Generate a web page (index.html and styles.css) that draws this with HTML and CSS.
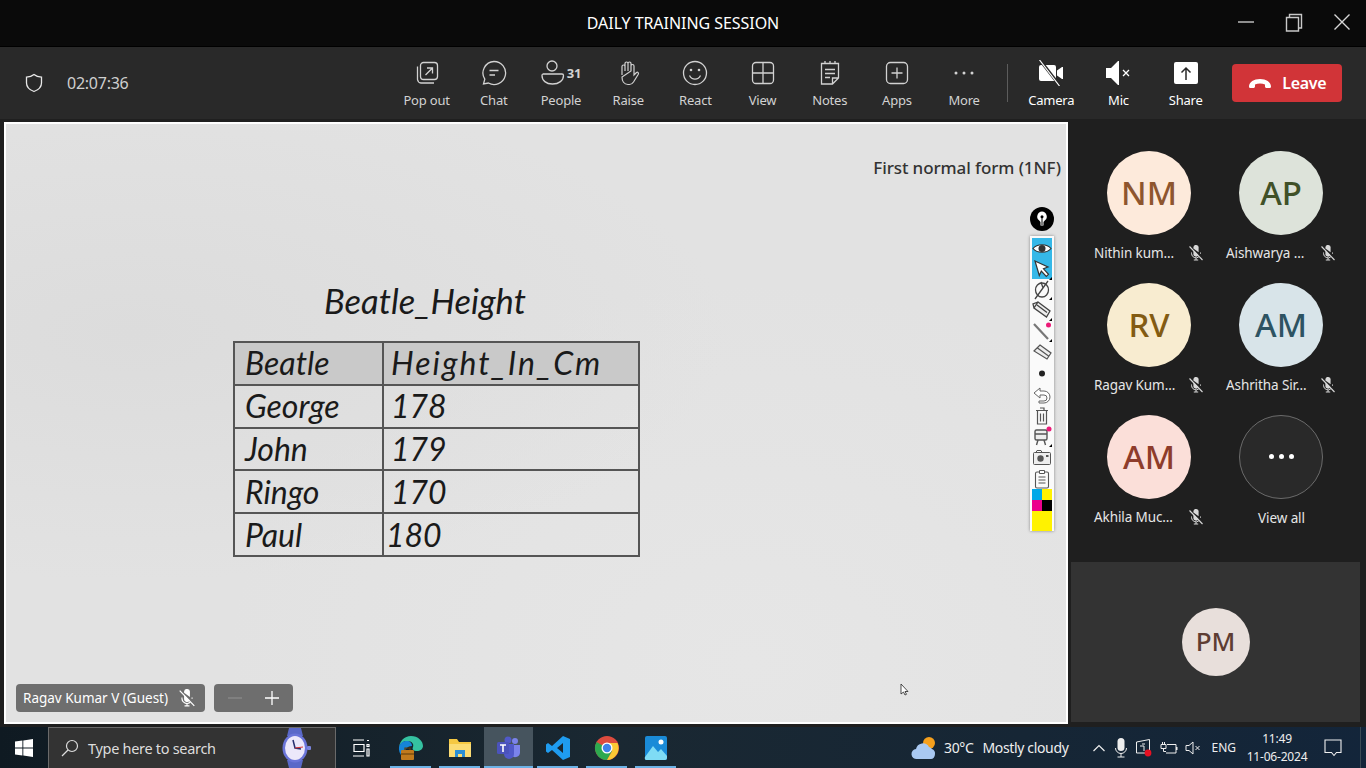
FILE: index.html
```html
<!DOCTYPE html>
<html lang="en">
<head>
    <meta charset="UTF-8">
    <title>DAILY TRAINING SESSION</title>
    <link rel="stylesheet" href="styles.css">
</head>
<body>
    <svg class="defs" width="0" height="0">
        <symbol id="micOff" viewBox="0 0 16 16">
            <path d="M5.400 2.200A2.600 2.600 0 0 1 10.600 3v4.200L5.400 3.400zM5.400 5l5 5a2.600 2.600 0 0 1-5-1.200z" fill="currentColor"/>
            <path d="M3.500 7.500V8.500a4.500 4.500 0 0 0 7.400 3.300M12.500 7.500v1.200M8 13v2M5.800 15h4.400" fill="none" stroke="currentColor"/>
            <path d="M1.500 1.500l13 13.500" fill="none" stroke="currentColor" stroke-width="1.100"/>
        </symbol>
    </svg>

    <!-- Title bar -->
    <header class="title-bar">
        <span class="title">DAILY TRAINING SESSION</span>
        <div class="win-controls">
            <svg width="48" height="30" viewBox="0 0 48 30"><path d="M16 15h16" stroke="#c8c8c8" stroke-width="1.400"/></svg>
            <svg width="48" height="30" viewBox="0 0 48 30"><path d="M16.500 10.500h12v13.500h-12zM19.500 10V7.500h12V21H29" fill="none" stroke="#c8c8c8" stroke-width="1.400"/></svg>
            <svg width="48" height="30" viewBox="0 0 48 30"><path d="M16.500 7.500l15 15M31.500 7.500l-15 15" stroke="#d8d8d8" stroke-width="1.400"/></svg>
        </div>
    </header>

    <!-- Toolbar -->
    <div class="toolbar">
        <div class="meeting-info">
            <svg width="20" height="22" viewBox="0 0 20 22"><path d="M10 2.500c2 1.700 4.500 2.600 7.500 2.700V11c0 4-2.800 6.800-7.500 8.500C5.300 17.800 2.500 15 2.500 11V5.200c3 -.1 5.500-1 7.500-2.700z" fill="none" stroke="#e8e8e8" stroke-width="1.300"/></svg>
            <span class="timer">02:07:36</span>
        </div>
        <div class="tools">
            <div class="tool">
                <svg width="26" height="26" viewBox="0 0 26 26"><rect x="6.500" y="2.500" width="17" height="17" rx="3" fill="none" stroke="currentColor" stroke-width="1.300"/><path d="M3.500 6.500v13a4 4 0 0 0 3.500 3.500h13M11.500 15l7-7M13 8h5.500v5.500" fill="none" stroke="currentColor" stroke-width="1.300"/></svg>
                <span>Pop out</span>
            </div>
            <div class="tool">
                <svg width="26" height="26" viewBox="0 0 26 26"><path d="M13 1.500a11.500 11.500 0 1 1-5.600 21.500L2.500 24l1.300-4.800A11.500 11.500 0 0 1 13 1.500z" fill="none" stroke="currentColor" stroke-width="1.300"/><path d="M8.500 10.500h9M8.500 15h5.500" stroke="currentColor" stroke-width="1.300"/></svg>
                <span>Chat</span>
            </div>
            <div class="tool">
                <div class="people-icon">
                    <svg width="24" height="26" viewBox="0 0 24 26"><circle cx="11" cy="6" r="5" fill="none" stroke="currentColor" stroke-width="1.300"/><path d="M2 14h19a1.500 1.500 0 0 1 1.500 1.500c0 5-4.500 8.500-11 8.500S1 20.500 1 15.500A1.500 1.500 0 0 1 2 14z" fill="none" stroke="currentColor" stroke-width="1.300"/></svg>
                    <b>31</b>
                </div>
                <span>People</span>
            </div>
            <div class="tool">
                <svg width="26" height="26" viewBox="0 0 26 26"><path d="M7 15V6.500a1.500 1.500 0 0 1 3 0M10 11V3.500a1.500 1.500 0 0 1 3 0V11M13 11V3.500a1.500 1.500 0 0 1 3 0V11M16 11V6a1.500 1.500 0 0 1 3 0v9l2.500-2.500c1.200-.8 2.500.5 1.800 1.700L18.500 22c-1 1.500-2 2.500-4 2.500h-1.500C9 24.500 7 21 7 17z" fill="none" stroke="currentColor" stroke-width="1.200"/></svg>
                <span>Raise</span>
            </div>
            <div class="tool">
                <svg width="26" height="26" viewBox="0 0 26 26"><circle cx="13" cy="13" r="11.500" fill="none" stroke="currentColor" stroke-width="1.300"/><circle cx="9" cy="10" r="1.300" fill="currentColor"/><circle cx="17" cy="10" r="1.300" fill="currentColor"/><path d="M7.500 15.500c1.200 2.500 3.200 3.700 5.500 3.700s4.300-1.200 5.500-3.700" fill="none" stroke="currentColor" stroke-width="1.300"/></svg>
                <span>React</span>
            </div>
            <div class="tool">
                <svg width="26" height="26" viewBox="0 0 26 26"><rect x="2.500" y="2.500" width="21" height="21" rx="3.500" fill="none" stroke="currentColor" stroke-width="1.300"/><path d="M13 2.500v21M2.500 13h21" stroke="currentColor" stroke-width="1.300"/></svg>
                <span>View</span>
            </div>
            <div class="tool">
                <svg width="26" height="26" viewBox="0 0 26 26"><path d="M4.500 3.500h17v14.500l-6 6h-11zM21.500 18h-6v6" fill="none" stroke="currentColor" stroke-width="1.300"/><path d="M8 1v3M13 1v3M18 1v3M8 9.500h10M8 13.500h10M8 17.500h5" stroke="currentColor" stroke-width="1.300"/></svg>
                <span>Notes</span>
            </div>
            <div class="tool">
                <svg width="26" height="26" viewBox="0 0 26 26"><rect x="2.500" y="2.500" width="21" height="21" rx="4" fill="none" stroke="currentColor" stroke-width="1.300"/><path d="M13 7.500v11M7.500 13h11" stroke="currentColor" stroke-width="1.300"/></svg>
                <span>Apps</span>
            </div>
            <div class="tool">
                <svg width="26" height="26" viewBox="0 0 26 26"><circle cx="5" cy="13" r="1.500" fill="currentColor"/><circle cx="13" cy="13" r="1.500" fill="currentColor"/><circle cx="21" cy="13" r="1.500" fill="currentColor"/></svg>
                <span>More</span>
            </div>
        </div>
        <div class="divider"></div>
        <div class="tools tools-on">
            <div class="tool">
                <svg width="26" height="26" viewBox="0 0 26 26"><path d="M3 5h13a2 2 0 0 1 2 2v12a2 2 0 0 1-2 2H3a2 2 0 0 1-2-2V7a2 2 0 0 1 2-2zM19 10.500l5-3.500h1v12h-1l-5-3.500z" fill="#fff"/><path d="M2 0l20 26" stroke="#292929" stroke-width="3"/><path d="M1.500 0l20 26" stroke="#fff" stroke-width="1.200"/></svg>
                <span>Camera</span>
            </div>
            <div class="tool">
                <svg width="26" height="26" viewBox="0 0 26 26"><path d="M1 8h5l7-7h1v24h-1l-7-7H1z" fill="#fff"/><path d="M18 10l6 6M24 10l-6 6" stroke="#fff" stroke-width="1.300"/></svg>
                <span>Mic</span>
            </div>
            <div class="tool">
                <svg width="26" height="26" viewBox="0 0 26 26"><rect x="1" y="2" width="24" height="22" rx="2" fill="#fff"/><path d="M13 20V8M8.500 12.500L13 8l4.500 4.500" fill="none" stroke="#292929" stroke-width="1.500"/></svg>
                <span>Share</span>
            </div>
        </div>
        <button class="leave">
            <svg width="24" height="12" viewBox="0 0 24 12"><path d="M1 9.500C1 5 6 2 12 2s11 3 11 7.500c0 1-.8 1.500-1.500 1.500h-3c-.8 0-1.500-.6-1.500-1.500V7.500C15.500 6.800 13.800 6.500 12 6.500s-3.500.3-5 1V9.500C7 10.400 6.300 11 5.500 11h-3C1.800 11 1 10.500 1 9.500z" fill="#fff"/></svg>
            Leave
        </button>
    </div>

    <!-- Main -->
    <main class="meeting">
        <section class="stage">
            <p class="slide-heading">First normal form (1NF)</p>
            <div class="slide-body">
                <h2 class="slide-title">Beatle_Height</h2>
                <table class="beatles">
                    <tr class="head"><td>Beatle</td><td class="spaced">Height_In_Cm</td></tr>
                    <tr><td>George</td><td>178</td></tr>
                    <tr><td>John</td><td>179</td></tr>
                    <tr><td>Ringo</td><td>170</td></tr>
                    <tr><td>Paul</td><td class="tight">180</td></tr>
                </table>
            </div>

            <!-- Pen tools over the slide -->
            <div class="pen-bar">
                <div class="pen-badge">
                    <svg width="24" height="24" viewBox="0 0 24 24"><circle cx="12" cy="12" r="12" fill="#000"/><path d="M12 4.500a5 5 0 0 1 3 8.800L13.500 15v3.500h-3V15L9 13.300A5 5 0 0 1 12 4.500z" fill="#fff"/><circle cx="12" cy="9.800" r="1.500" fill="#000"/><path d="M12 11v7" stroke="#000"/></svg>
                </div>
                <div class="pen-strip">
                    <div class="pen-active">
                        <svg width="20" height="21" viewBox="0 0 20 21"><path d="M1 10.500C5 5.500 15 5.500 19 10.500 15 15.500 5 15.500 1 10.500z" fill="#fff" stroke="#333" stroke-width="1.200"/><circle cx="10" cy="10.500" r="3.500" fill="#333"/></svg>
                        <svg width="20" height="21" viewBox="0 0 20 21"><path d="M3 2l13 6-4.500 1.800 5 5.500-2.200 2.200-5-5.500-2 4.500z" fill="#fff" stroke="#333" stroke-width="1.200"/><path d="M20 21v-3l-3 3z" fill="#000"/></svg>
                    </div>
                    <svg width="20" height="21" viewBox="0 0 20 21"><ellipse cx="10" cy="11" rx="6.500" ry="7" fill="none" stroke="#444" stroke-width="1.300"/><path d="M3 20L16 2M9 3l2 6" stroke="#444" stroke-width="1.300"/><path d="M20 21v-3l-3 3z" fill="#000"/></svg>
                    <svg width="20" height="21" viewBox="0 0 20 21"><path d="M6 2l12 9-3.500 6L2 8zM2 8L1 4l5-2M5 5l10 7.500" fill="#eee" stroke="#444" stroke-width="1.300"/><path d="M20 21v-3l-3 3z" fill="#000"/></svg>
                    <svg width="20" height="21" viewBox="0 0 20 21"><path d="M2 3l14 15" stroke="#777" stroke-width="2.200"/><circle cx="16.500" cy="4" r="2.500" fill="#ec1a78"/><path d="M20 21v-3l-3 3z" fill="#000"/></svg>
                    <svg width="20" height="21" viewBox="0 0 20 21"><path d="M8 3l11 8-4 6L2 9zM5.500 6l11 8" fill="#eee" stroke="#555" stroke-width="1.200"/></svg>
                    <svg width="20" height="21" viewBox="0 0 20 21"><circle cx="10" cy="10.500" r="3" fill="#222"/></svg>
                    <svg width="20" height="21" viewBox="0 0 20 21"><path d="M8 4L2 9l6 5V11h4a3 3 0 0 1 0 6H7v2h5a5 5 0 0 0 0-12H8z" fill="#fff" stroke="#666"/></svg>
                    <svg width="20" height="21" viewBox="0 0 20 21"><path d="M4 5.500h12M5.500 5.500V19h9V5.500M8 3h4v2.500M8.500 8.500v8M11.500 8.500v8" fill="none" stroke="#555" stroke-width="1.200"/></svg>
                    <svg width="20" height="21" viewBox="0 0 20 21"><rect x="3" y="4" width="12" height="10" rx="1.500" fill="#eee" stroke="#555" stroke-width="1.400"/><path d="M6 14l-1.500 5M12 14l1.500 5M3 8h12" stroke="#555" stroke-width="1.400"/><circle cx="17" cy="3" r="2.500" fill="#ec1a78"/><path d="M20 21v-3l-3 3z" fill="#000"/></svg>
                    <svg width="20" height="21" viewBox="0 0 20 21"><rect x="1.500" y="5.500" width="17" height="12" rx="1" fill="#eee" stroke="#555"/><circle cx="8.500" cy="11.500" r="3.200" fill="#555"/><path d="M4 5.500l1-2h4l1 2" fill="none" stroke="#555"/><rect x="14" y="8" width="2.500" height="2" fill="#555"/></svg>
                    <svg width="20" height="21" viewBox="0 0 20 21"><rect x="3.500" y="4" width="13" height="16" rx="1.500" fill="none" stroke="#555" stroke-width="1.100"/><path d="M7.500 2.500h5v3h-5zM6.500 9h7M6.500 12h7M6.500 15h7" fill="#fff" stroke="#555"/></svg>
                    <div class="swatches">
                        <i class="cyan"></i><i class="yellow"></i><i class="magenta"></i><i class="black"></i><i class="wide yellow"></i>
                    </div>
                </div>
            </div>

            <div class="stage-tags">
                <div class="tag">
                    Ragav Kumar V (Guest)
                    <svg width="18" height="18" viewBox="0 0 16 16"><use href="#micOff"/></svg>
                </div>
                <div class="tag zoom-tag">
                    <svg width="16" height="16" viewBox="0 0 16 16"><path d="M1 8h14" stroke="#8a8a8a" stroke-width="1.300"/></svg>
                    <svg width="16" height="16" viewBox="0 0 16 16"><path d="M1 8h14M8 1v14" stroke="#fff" stroke-width="1.300"/></svg>
                </div>
            </div>

            <svg class="cursor" width="9" height="13" viewBox="0 0 9 13"><path d="M1 1v10l2.500-2 1.500 3 1.500-.7L5 8.500h3z" fill="#fff" stroke="#222" stroke-width=".8"/></svg>
        </section>

        <aside class="side">
            <div class="people-grid">
                <div class="person">
                    <div class="avatar nm">NM</div>
                    <div class="person-name"><span>Nithin kum...</span><svg width="16" height="16"><use href="#micOff"/></svg></div>
                </div>
                <div class="person">
                    <div class="avatar ap">AP</div>
                    <div class="person-name"><span>Aishwarya ...</span><svg width="16" height="16"><use href="#micOff"/></svg></div>
                </div>
                <div class="person">
                    <div class="avatar rv">RV</div>
                    <div class="person-name"><span>Ragav Kum...</span><svg width="16" height="16"><use href="#micOff"/></svg></div>
                </div>
                <div class="person">
                    <div class="avatar am1">AM</div>
                    <div class="person-name"><span>Ashritha Sir...</span><svg width="16" height="16"><use href="#micOff"/></svg></div>
                </div>
                <div class="person">
                    <div class="avatar am2">AM</div>
                    <div class="person-name"><span>Akhila Muc...</span><svg width="16" height="16"><use href="#micOff"/></svg></div>
                </div>
                <div class="person">
                    <div class="avatar view-all"><i></i><i></i><i></i></div>
                    <div class="person-name center"><span>View all</span></div>
                </div>
            </div>
            <div class="pinned">
                <div class="avatar pm">PM</div>
            </div>
        </aside>
    </main>

    <!-- Windows taskbar -->
    <footer class="taskbar">
        <div class="start">
            <svg width="18" height="18" viewBox="0 0 18 18"><path d="M0 2.600l7.400-1V8.500H0zM8.300 1.400L18 0v8.500H8.300zM0 9.500h7.400v6.900l-7.400-1zM8.300 9.500H18V18l-9.700-1.400z" fill="#fff"/></svg>
        </div>
        <div class="search">
            <svg width="18" height="18" viewBox="0 0 18 18"><circle cx="11" cy="7" r="5.500" fill="none" stroke="#ddd" stroke-width="1.200"/><path d="M7 11l-6 6" stroke="#ddd" stroke-width="1.200"/></svg>
            <span>Type here to search</span>
            <svg class="watch" width="36" height="40" viewBox="0 0 36 40"><path d="M11 0h12l2 8H9zM9 32h16l-2 8H11z" fill="#5a68c8"/><ellipse cx="17" cy="20" rx="12.500" ry="14.500" fill="#6a74d8"/><ellipse cx="17" cy="20" rx="10" ry="12" fill="#ece8fa"/><path d="M15 12l2 8 6 1" fill="none" stroke="#27306e" stroke-width="1.500"/><path d="M17 20l8-1" stroke="#d33"/><rect x="29" y="18" width="4" height="4" rx="1" fill="#7a84dc"/></svg>
        </div>
        <div class="task-icons">
            <div class="task plain">
                <svg width="18" height="18" viewBox="0 0 18 18"><path d="M1 1h11M1 17h11M2 5.500h10v7H2zM15 1.500h2M15 5.500h2v2h-2zM15 10h2v7h-2z" fill="none" stroke="#fff" stroke-width="1.200"/></svg>
            </div>
            <div class="task running">
                <svg width="26" height="26" viewBox="0 0 26 26"><path d="M13 1c7 0 12 5 12 10 0 3-3 5-6 5-4 0-5-2-4-4 1-3-1-6-6-6-4 0-7 3-8 6C2 6 6 1 13 1z" fill="#35c1a0"/><path d="M1 12c1-4 4-6 8-6 3 0 5 2 5 5-4 0-8 3-7 8 .5 3 3 5 6 6C6 25 0 19 1 12z" fill="#1584d8"/><rect x="3" y="15" width="13" height="10" rx="1" fill="#c17a1c"/><path d="M7 15v-2h5v2M3 19h13" fill="none" stroke="#5e3a09" stroke-width="1.200"/></svg>
            </div>
            <div class="task running">
                <svg width="24" height="22" viewBox="0 0 24 22"><path d="M1 2h8l2 3h12v15H1z" fill="#f5c842"/><path d="M1 7h22v13H1z" fill="#fbdc74"/><path d="M7 13h10v7h-3v-3h-4v3H7z" fill="#2b8fd6"/></svg>
            </div>
            <div class="task running active">
                <svg width="26" height="24" viewBox="0 0 26 24"><circle cx="19" cy="5" r="3" fill="#7b83eb"/><path d="M15 9h9v8a5 5 0 0 1-9 2z" fill="#7b83eb"/><circle cx="12" cy="4" r="3.500" fill="#5059c9"/><path d="M8 8h10v10a5 5 0 0 1-10 0z" fill="#5059c9"/><rect x="1" y="6" width="12" height="12" rx="1.500" fill="#4b53bc"/><path d="M4 9h6M7 9v7" stroke="#fff" stroke-width="1.600"/></svg>
            </div>
            <div class="task running">
                <svg width="26" height="26" viewBox="0 0 26 26"><path d="M18 1l7 3v18l-7 3L7 15l-4 3-2-1.500V9.500L3 8l4 3zM18 8l-6 5 6 5z" fill="#1f9cf0" fill-rule="evenodd"/></svg>
            </div>
            <div class="task running">
                <svg width="26" height="26" viewBox="0 0 26 26"><circle cx="13" cy="13" r="12" fill="#dd4b3e"/><path d="M13 13L2.600 7A12 12 0 0 0 13 25l5-9z" fill="#2da94f"/><path d="M13 8h10.500A12 12 0 0 1 13 25l5.200-9z" fill="#fcc934"/><circle cx="13" cy="13" r="5.500" fill="#fff"/><circle cx="13" cy="13" r="4.200" fill="#3f83ea"/></svg>
            </div>
            <div class="task running">
                <svg width="24" height="26" viewBox="0 0 24 26"><rect x="1" y="1" width="22" height="24" rx="2" fill="#1a8bd8"/><path d="M1 22l8-11 5 6 3-3 6 7v2a2 2 0 0 1-2 2H3a2 2 0 0 1-2-3z" fill="#7fdcf5"/><circle cx="17" cy="7" r="2.500" fill="#fff"/></svg>
            </div>
        </div>
        <div class="tray">
            <div class="weather">
                <svg width="26" height="26" viewBox="0 0 26 26"><circle cx="18" cy="8" r="6" fill="#f6a01d"/><path d="M6 24a5 5 0 0 1-1-10 7 7 0 0 1 13-2 5 5 0 0 1 3 2 5 5 0 0 1 3 5c0 3-2 5-4 5z" fill="#a9c9f2"/></svg>
                <span>30°C</span>
                <span class="weather-text">Mostly cloudy</span>
            </div>
            <div class="tray-icons">
                <svg width="14" height="14" viewBox="0 0 14 14"><path d="M1.500 10L7 4.500 12.500 10" fill="none" stroke="#eee" stroke-width="1.200"/></svg>
                <svg width="14" height="20" viewBox="0 0 14 20"><rect x="3.500" y="0" width="7" height="13" rx="3.500" fill="#eee"/><path d="M1.500 10a5.500 5.500 0 0 0 11 0M7 15.500V19M3.500 19h7" fill="none" stroke="#eee"/></svg>
                <svg width="18" height="20" viewBox="0 0 18 20"><path d="M1.500 4L14.500 1.500V15H1.500z" fill="none" stroke="#eee"/><path d="M5 8h4v5M10 6H7" fill="none" stroke="#eee"/><circle cx="13" cy="15" r="3.400" fill="#e81123"/></svg>
                <svg width="18" height="14" viewBox="0 0 18 14"><path d="M1 3.500h5v4H1zM2.500 1v2.500M4.500 1v2.500M3.500 7.500v3H6M7 3.500h9v8.500H6" fill="none" stroke="#eee"/><path d="M16 6h1.500v3H16" fill="#eee"/></svg>
                <svg width="16" height="14" viewBox="0 0 16 14"><path d="M1 4.500h3l4-3.500v12L4 9.500H1z" fill="none" stroke="#eee"/><path d="M10.500 5l4 4M14.500 5l-4 4" stroke="#eee"/></svg>
            </div>
            <span class="lang">ENG</span>
            <div class="clock"><span>11:49</span><span>11-06-2024</span></div>
            <div class="notify">
                <svg width="18" height="18" viewBox="0 0 18 18"><path d="M1 1h16v12.500h-4.500L10 16.500 7.500 13.500H1z" fill="none" stroke="#f0f0f0" stroke-width="1.100"/></svg>
            </div>
        </div>
    </footer>
</body>
</html>
```

FILE: styles.css
```css
* {
    box-sizing: border-box;
}

html, body {
    height: 100%;
}

body {
    margin: 0;
    display: flex;
    flex-direction: column;
    height: 768px;
    overflow: hidden;
    background-color: #1f1f1f;
    color: #fff;
    font-family: "Noto Sans", "Open Sans", sans-serif;
}

.defs {
    position: absolute;
}

/* Title bar */
.title-bar {
    height: 47px;
    flex: none;
    display: flex;
    align-items: center;
    justify-content: center;
    position: relative;
    background-color: #0a0a0a;
    border-bottom: 1px solid #000;
}

.title {
    font-size: 16px;
    letter-spacing: -0.050px;
    color: #fff;
}

.win-controls {
    position: absolute;
    right: 0;
    top: 7px;
    display: flex;
}

/* Toolbar */
.toolbar {
    height: 72px;
    flex: none;
    display: flex;
    align-items: center;
    background-color: #292929;
}

.meeting-info {
    width: 393px;
    padding-left: 24px;
    display: flex;
    align-items: center;
    gap: 23px;
    flex: none;
}

.timer {
    font-size: 16px;
    letter-spacing: -0.250px;
    color: #cfcfcf;
}

.tools {
    display: flex;
}

.tool {
    width: 67.200px;
    height: 72px;
    padding-top: 13px;
    display: flex;
    flex-direction: column;
    align-items: center;
    gap: 5px;
    color: #d2d2d2;
    font-size: 13px;
    letter-spacing: -0.200px;
}

.tool svg {
    display: block;
}

.people-icon {
    display: flex;
    align-items: center;
    gap: 2px;
}

.people-icon b {
    font-size: 13px;
    line-height: 16px;
}

.tools-on .tool {
    color: #fff;
}

.divider {
    width: 1px;
    height: 38px;
    margin: 0 10px 0 9px;
    background-color: #5c5c5c;
}

.leave {
    width: 110px;
    height: 38px;
    margin-left: 13px;
    border: none;
    border-radius: 4px;
    display: flex;
    align-items: center;
    justify-content: center;
    gap: 10px;
    padding-top: 1px;
    background-color: #d13438;
    color: #fff;
    font-family: inherit;
    font-size: 16px;
    font-weight: 600;
    letter-spacing: -0.300px;
}

/* Main */
.meeting {
    height: 608px;
    flex: none;
    display: flex;
}

.stage {
    width: 1064px;
    height: 602px;
    margin: 3px 0 0 4px;
    position: relative;
    border: 2px solid #fff;
    background-color: #e2e2e2;
    background-image: radial-gradient(ellipse at 12% 35%, #dcdcdc, transparent 45%), radial-gradient(ellipse at 70% 90%, #e6e6e6, transparent 50%);
    color: #111;
}

.slide-heading {
    margin: 33px 5px 0 0;
    text-align: right;
    font-size: 17px;
    font-weight: 500;
    letter-spacing: -0.100px;
    line-height: 22px;
    color: #333;
}

.slide-body {
    margin-top: 103px;
    padding-left: 227px;
}

.slide-title {
    margin: 0 0 22px 91px;
    font-family: "Lato", sans-serif;
    font-style: italic;
    font-weight: 400;
    font-size: 34.500px;
    line-height: 37px;
    color: #1a1a1a;
}

.beatles {
    width: 407px;
    border-collapse: collapse;
    table-layout: fixed;
    font-family: "Lato", sans-serif;
    font-style: italic;
    font-size: 32px;
    color: #1a1a1a;
}

.beatles td {
    height: 42.800px;
    padding: 0 0 0 10px;
    line-height: 40px;
    border: 2px solid #555;
}

.beatles td:first-child {
    width: 149px;
}

.beatles td:last-child {
    padding-left: 7px;
}

.beatles td.spaced {
    letter-spacing: 2px;
}

.beatles td.tight {
    padding-left: 2px;
}

.beatles .head {
    background-color: #c9c9c9;
}

/* Pen tools */
.pen-bar {
    position: absolute;
    top: 83px;
    right: 12px;
    width: 24px;
    display: flex;
    flex-direction: column;
    align-items: center;
    gap: 5px;
}

.pen-badge {
    height: 24px;
}

.pen-strip {
    width: 24px;
    height: 295px;
    padding: 2px;
    display: flex;
    flex-direction: column;
    align-items: center;
    background-color: #fafafa;
    box-shadow: 0 0 3px rgba(0, 0, 0, 0.4);
}

.pen-strip svg {
    display: block;
    flex: none;
}

.pen-active {
    width: 20px;
    height: 41px;
    margin-bottom: 0;
    background-color: #35b8e8;
}

.swatches {
    width: 20px;
    display: grid;
    grid-template-columns: 10px 10px;
    grid-auto-rows: 11px;
}

.swatches i {
    display: block;
}

.swatches .wide {
    grid-column: span 2;
    height: 20px;
}

.cyan { background-color: #00a8e8; }
.yellow { background-color: #fff200; }
.magenta { background-color: #ec008c; }
.black { background-color: #000; }

/* Tags bottom left */
.stage-tags {
    position: absolute;
    left: 10px;
    bottom: 10px;
    display: flex;
    gap: 9px;
}

.tag {
    height: 28px;
    padding: 0 9px 0 7px;
    display: flex;
    align-items: center;
    gap: 10px;
    border-radius: 4px;
    background-color: #6e6e6e;
    color: #fff;
    font-size: 13.500px;
}

.zoom-tag {
    width: 79px;
    padding: 0 13px;
    justify-content: space-between;
}

.cursor {
    position: absolute;
    left: 894px;
    top: 559px;
}

/* Side panel */
.side {
    width: 292px;
    display: flex;
    flex-direction: column;
    align-items: flex-start;
    padding-left: 3px;
}

.people-grid {
    width: 289px;
    height: 440px;
    padding: 32px 0 0 12px;
    display: grid;
    grid-template-columns: 132px 132px;
    grid-auto-rows: 132px;
}

.person {
    display: flex;
    flex-direction: column;
    align-items: center;
}

.avatar {
    width: 84px;
    height: 84px;
    padding-bottom: 2px;
    border-radius: 50%;
    display: flex;
    align-items: center;
    justify-content: center;
    font-size: 33px;
    font-weight: 500;
}

.person-name {
    width: 112px;
    margin-top: 9px;
    padding-left: 1px;
    display: flex;
    align-items: center;
    justify-content: space-between;
    height: 18px;
    font-size: 13.500px;
    letter-spacing: -0.100px;
    color: #e6e6e6;
}

.person-name.center {
    justify-content: center;
    margin-top: 10px;
}

.person-name svg {
    margin-right: 1px;
    color: #d8d8d8;
}

.nm { background-color: #fdeadb; color: #8e562e; }
.ap { background-color: #dde3da; color: #405128; }
.rv { background-color: #f8ecd0; color: #835b12; }
.am1 { background-color: #d8e4e9; color: #2d5362; }
.am2 { background-color: #fbdfd9; color: #8e3c2b; }

.view-all {
    gap: 5px;
    padding-bottom: 0;
    background-color: #292929;
    border: 1px solid #6b6b6b;
}

.view-all i {
    width: 5px;
    height: 5px;
    margin-top: -2px;
    border-radius: 50%;
    background-color: #fff;
}

.pinned {
    width: 289px;
    height: 160px;
    margin-top: 3px;
    display: flex;
    align-items: center;
    justify-content: center;
    background-color: #333;
}

.avatar.pm {
    width: 68px;
    height: 68px;
    font-size: 26px;
    background-color: #e8dfdb;
    color: #5e3d33;
}

/* Taskbar */
.taskbar {
    height: 41px;
    flex: none;
    display: flex;
    align-items: stretch;
    background: linear-gradient(90deg, #0f1a22, #1a2832 45%, #162635 75%, #13253a);
}

.start {
    width: 48px;
    display: flex;
    align-items: center;
    justify-content: center;
}

.search {
    width: 288px;
    padding-left: 12px;
    display: flex;
    align-items: center;
    gap: 9px;
    position: relative;
    background-color: #333;
    border: 1px solid #6a6a6a;
    border-bottom: none;
    color: #ddd;
    font-size: 14.500px;
    letter-spacing: -0.300px;
}

.watch {
    position: absolute;
    left: 229px;
    top: 0;
}

.task-icons {
    display: flex;
}

.task {
    width: 49px;
    display: flex;
    align-items: center;
    justify-content: center;
    position: relative;
}

.task.plain {
    width: 50px;
}

.task.running::after {
    content: "";
    position: absolute;
    left: 4px;
    right: 4px;
    bottom: 0;
    height: 2px;
    background-color: #6cb2e6;
}

.task.active {
    background-color: #46545e;
}

.task.active::after {
    left: 0;
    right: 0;
}

.tray {
    margin-left: auto;
    padding-right: 5px;
    display: flex;
    align-items: center;
    color: #eee;
}

.weather {
    display: flex;
    align-items: center;
    gap: 7px;
    font-size: 14px;
    letter-spacing: -0.350px;
}

.weather-text {
    margin-left: 2px;
}

.tray-icons {
    margin-left: 24px;
    width: 109px;
    display: flex;
    align-items: center;
    justify-content: space-between;
}

.lang {
    margin-left: 10px;
    font-size: 12px;
}

.clock {
    width: 72px;
    margin-left: 5px;
    display: flex;
    flex-direction: column;
    align-items: center;
    font-size: 12px;
    line-height: 18px;
    letter-spacing: -0.200px;
}

.notify {
    width: 48px;
    padding-right: 8px;
    display: flex;
    align-items: center;
    justify-content: center;
    border-right: 1px solid #3b4a55;
    align-self: stretch;
}
```
